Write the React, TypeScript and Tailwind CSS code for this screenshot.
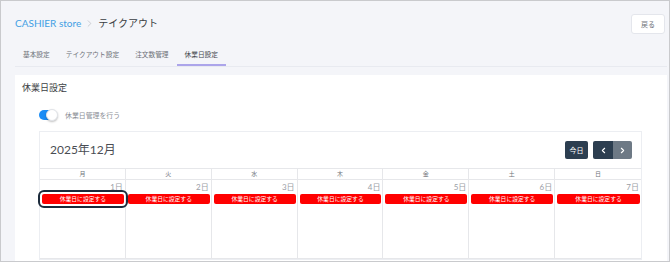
import { ChevronLeft, ChevronRight } from "lucide-react";

const tabs = ["基本設定", "テイクアウト設定", "注文数管理", "休業日設定"];
const weekdays = ["月", "火", "水", "木", "金", "土", "日"];
const week = [1, 2, 3, 4, 5, 6, 7];

function DayCell({ day, focused }: { day: number; focused: boolean }) {
  return (
    <div className="flex h-[79px] flex-col border-r border-b border-[#e6e7ea] pt-[2px] last:border-r-0">
      <div className="pr-[2px] text-right text-[8px] leading-[10px] text-[#9a9ea6]">{day}日</div>
      <div className="mt-[2px] pl-[2px] pr-[1px]">
        <button
          type="button"
          className={
            "flex h-[10px] w-full items-center justify-center rounded-[2px] bg-[#ff0000] text-[5.8px] leading-none text-white" +
            (focused ? " outline-2 outline-offset-2 outline-[#1c2b3b]" : "")
          }
        >
          休業日に設定する
        </button>
      </div>
    </div>
  );
}

export default function App() {
  return (
    <div className="h-[262px] w-[670px] overflow-hidden border border-[#c9cacd] bg-[#f4f5f9] pl-[14px] pr-[2px] font-['Lato','Noto_Sans_CJK_JP',sans-serif]">
      <header className="flex h-[40px] items-start justify-between pt-[13px]">
        <div className="mt-[1px] flex items-center text-[10px] leading-[16px]">
          <span className="text-[#42a0e4]">CASHIER store</span>
          <ChevronRight className="mx-[3px] size-[11px] text-[#a9acb2]" strokeWidth={1.2} aria-hidden />
          <span className="text-[#3a3d42]">テイクアウト</span>
        </div>
        <button
          type="button"
          className="mr-[2px] h-[20px] w-[34px] rounded-[3px] border border-[#e4e6ec] bg-white text-[7px] text-[#6f737a]"
        >
          戻る
        </button>
      </header>

      <nav className="flex border-b border-[#e8eaf0] pt-[8px]">
        {tabs.map((t, i) => (
          <div
            key={t}
            className={
              "border-b-2 px-[8px] pb-[5px] text-[6.7px] leading-[10px] " +
              (i === 3 ? "border-[#aca5ea] text-[#45484e]" : "border-transparent text-[#6d7178]")
            }
          >
            {t}
          </div>
        ))}
      </nav>

      <section className="mt-[8px] h-[200px] bg-white pl-[7px] pt-[7px]">
        <h2 className="text-[9px] leading-[12px] text-[#3c3f44]">休業日設定</h2>

        <div className="ml-[17px] mt-[16px] flex items-center gap-[8px]">
          <div className="relative h-[10px] w-[18px] rounded-full bg-[#1a8cf5]">
            <span className="absolute right-[-1px] top-[-1px] size-[12px] rounded-full border border-[#e2e4e8] bg-white shadow-[0_1px_2px_rgba(0,0,0,0.25)]" />
          </div>
          <span className="text-[6.9px] leading-[10px] text-[#8b8f96]">休業日管理を行う</span>
        </div>

        <div className="ml-[17px] mt-[11px] w-[603px] border border-[#eceef2] bg-white">
          <div className="flex items-center justify-between pl-[10px] pr-[9px] pt-[9px]">
            <div className="text-[12px] leading-[18px] text-[#4a4d53]">2025年12月</div>
            <div className="flex items-center gap-[5px]">
              <button
                type="button"
                className="h-[18px] w-[23px] rounded-[2px] bg-[#2c3e50] text-[7px] text-white"
              >
                今日
              </button>
              <div className="flex overflow-hidden rounded-[2px]">
                <button type="button" className="flex h-[18px] w-[20px] items-center justify-center bg-[#2c3e50] text-white">
                  <ChevronLeft className="size-[9px]" strokeWidth={3} aria-hidden />
                </button>
                <button type="button" className="flex h-[18px] w-[19px] items-center justify-center bg-[#6d7985] text-white">
                  <ChevronRight className="size-[9px]" strokeWidth={3} aria-hidden />
                </button>
              </div>
            </div>
          </div>

          <div className="mt-[9px] grid grid-cols-7 border-t border-[#e6e7ea]">
            {weekdays.map((d) => (
              <div
                key={d}
                className="border-r border-b border-[#e6e7ea] text-center text-[6px] leading-[10px] text-[#6d7178] last:border-r-0"
              >
                {d}
              </div>
            ))}
          </div>
          <div className="grid grid-cols-7">
            {week.map((d) => (
              <DayCell key={d} day={d} focused={d === 1} />
            ))}
          </div>
        </div>
      </section>
    </div>
  );
}
